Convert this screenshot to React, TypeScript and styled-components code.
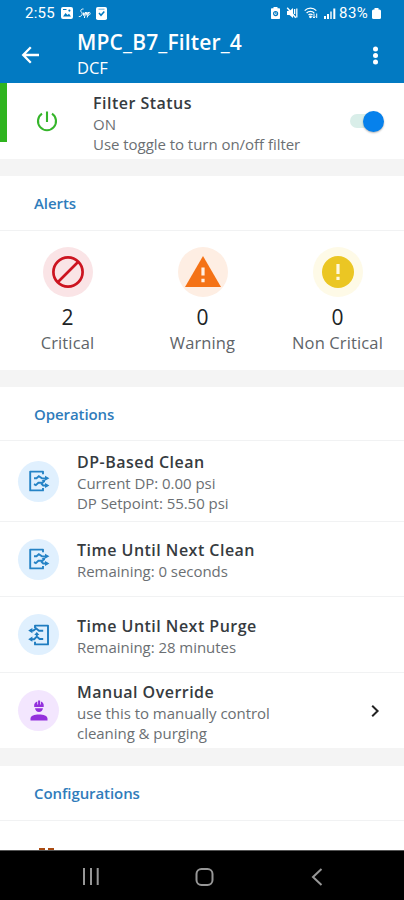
import React from 'react';
import styled, { createGlobalStyle } from 'styled-components';

const GlobalStyle = createGlobalStyle`
  * { box-sizing: border-box; }
  body { margin: 0; background: #fff; font-family: "Open Sans", sans-serif; }
  svg { display: block; flex: none; }
`;

const Screen = styled.div`
  width: 404px;
  height: 900px;
  display: flex;
  flex-direction: column;
  overflow: hidden;
  background: #fff;
`;

const Header = styled.header`
  flex: none;
  height: 83px;
  background: #027ac2;
  color: #fff;
`;

const StatusBar = styled.div`
  height: 26px;
  display: flex;
  align-items: center;
  padding: 0 23px 0 25px;
  font: 400 15px/26px Roboto, sans-serif;
`;

const Clock = styled.span`
  width: 36px;
  letter-spacing: 0.25px;
`;

const StatusIcons = styled.div<{ $gap: number }>`
  display: flex;
  align-items: center;
  gap: ${(p) => p.$gap}px;
`;

const Spacer = styled.div`
  flex: 1;
`;

const Battery = styled.span`
  margin-left: 3px;
  margin-right: 2px;
  width: 31px;
  letter-spacing: 0.5px;
`;

const TitleBar = styled.div`
  display: flex;
  height: 57px;
  padding: 0 20px;
`;

const IconButton = styled.button<{ $width: number; $top: number }>`
  width: ${(p) => p.$width}px;
  border: 0;
  padding: ${(p) => p.$top}px 0 0;
  background: none;
  color: inherit;
  display: flex;
  align-items: flex-start;
`;

const TitleText = styled.div`
  flex: 1;
`;

const Title = styled.h1`
  margin: 1px 0 0;
  font-size: 21px;
  line-height: 30px;
  font-weight: 600;
  letter-spacing: 0.16px;
`;

const Subtitle = styled.div`
  font-size: 16.5px;
  line-height: 22px;
`;

const Gap = styled.div<{ $height: number }>`
  flex: none;
  height: ${(p) => p.$height}px;
  background: #f4f4f4;
`;

const StatusCard = styled.section`
  flex: none;
  height: 76px;
  display: flex;
  align-items: center;
  padding-right: 20px;
`;

const ActiveStripe = styled.div`
  align-self: flex-start;
  width: 7px;
  height: 59px;
  background: #2fb41f;
`;

const PowerSlot = styled.div`
  width: 86px;
  padding-left: 29px;
`;

const TextBlock = styled.div<{ $shift?: number }>`
  flex: 1;
  padding-top: ${(p) => p.$shift ?? 3}px;
`;

const ItemTitle = styled.div`
  font-size: 16px;
  line-height: 22px;
  font-weight: 600;
  letter-spacing: 0.48px;
  color: #363b40;
`;

const ItemLine = styled.div`
  font-size: 15px;
  line-height: 20px;
  color: #6b6f73;
  letter-spacing: -0.04px;
  white-space: nowrap;
`;

const Toggle = styled.div`
  width: 28px;
  height: 14px;
  display: flex;
  align-items: center;
  background: #d9eee9;
  border-radius: 7px;
  margin-right: 6px;
`;

const Knob = styled.div`
  flex: none;
  width: 21px;
  height: 21px;
  margin-left: 13px;
  border-radius: 50%;
  background: #0681ec;
  box-shadow: 0 1px 2px rgba(0, 0, 0, 0.3);
`;

const SectionHeader = styled.h2<{ $height: number }>`
  flex: none;
  height: ${(p) => p.$height}px;
  margin: 0;
  padding: 0 34px;
  display: flex;
  align-items: center;
  border-bottom: 1px solid #f1f2f3;
  color: #2f7cbb;
  font-size: 15px;
  font-weight: 600;
  letter-spacing: -0.08px;
`;

const AlertGrid = styled.section`
  flex: none;
  height: 139px;
  display: grid;
  grid-template-columns: repeat(3, 135px);
  padding-top: 16px;
`;

const AlertCell = styled.div`
  display: flex;
  flex-direction: column;
  align-items: center;
`;

const Disc = styled.div<{ $size: number; $color: string }>`
  flex: none;
  width: ${(p) => p.$size}px;
  height: ${(p) => p.$size}px;
  border-radius: 50%;
  background: ${(p) => p.$color};
  display: flex;
  align-items: center;
  justify-content: center;
`;

const AlertCount = styled.div`
  margin-top: 6px;
  font-size: 21px;
  line-height: 28px;
  color: #202326;
`;

const AlertLabel = styled.div`
  font-size: 16.5px;
  line-height: 24px;
  letter-spacing: 0.13px;
  color: #606468;
`;

const OperationRow = styled.div<{ $height: number; $last?: boolean }>`
  flex: none;
  height: ${(p) => p.$height}px;
  display: flex;
  align-items: center;
  gap: 18px;
  padding: 0 24px 0 18px;
  border-bottom: ${(p) => (p.$last ? 0 : 1)}px solid #f1f2f3;
`;

const PartialRow = styled.div`
  flex: 1;
  min-height: 0;
  overflow: hidden;
  padding: 27px 0 0 38px;
`;

const NavBar = styled.nav`
  flex: none;
  height: 50px;
  background: #000;
  border-top: 1px solid #555;
  display: flex;
  align-items: center;
  justify-content: space-between;
  padding: 2px 81px 0 82px;
`;

const HomeSlot = styled.div`
  padding-right: 2px;
`;

const PictureIcon = () => (
  <svg width="12" height="12" viewBox="0 0 12 12">
    <rect width="12" height="12" rx="2" fill="#fff" />
    <path d="M2 9.5 4.5 6l2 2L8 6.8l2 2.7z" fill="#027ac2" />
    <circle cx="8.4" cy="3.6" r="1.1" fill="#027ac2" />
    <path d="M2 2.5h3.5" stroke="#027ac2" />
  </svg>
);

const ScribbleIcon = () => (
  <svg width="13" height="11" viewBox="0 0 13 11" fill="none" stroke="#fff" strokeWidth="1">
    <path d="M5.5 1C3 .8 2 2.8 3.5 4.2S4 8.6.8 8.6M5.4 4.5l.2 3 2-3.5L6.4 10M8 7.6l.9-3.6.5 2.5 1.5-2.5M9.2 9.5l1.3-5c2.5-.8 2 2.7-.4 2.9" />
  </svg>
);

const CheckIcon = () => (
  <svg width="11" height="13" viewBox="0 0 11 13">
    <rect width="11" height="13" rx="1.8" fill="#fff" />
    <path d="m3 6 2 2.3L8.3 4.5" fill="none" stroke="#027ac2" strokeWidth="1.5" />
    <path d="M2.5 2.2h6" stroke="#027ac2" strokeWidth=".6" />
  </svg>
);

const SaverIcon = () => (
  <svg width="9" height="12" viewBox="0 0 9 12">
    <path d="M2.5 0h4v1.2H8c.6 0 1 .4 1 1V11c0 .6-.4 1-1 1H1c-.6 0-1-.4-1-1V2.2c0-.6.4-1 1-1h1.5z" fill="#fff" />
    <circle cx="4.6" cy="6.6" r="2" fill="none" stroke="#027ac2" strokeWidth="1.2" />
    <path d="M4.6 5.2v1.6h1.2" fill="none" stroke="#027ac2" strokeWidth=".8" />
  </svg>
);

const MuteIcon = () => (
  <svg width="12" height="12" viewBox="0 0 12 12">
    <path d="M1 4h2.5L7 1v10L3.5 8H1z" fill="#fff" />
    <path d="m1.2.8 8.6 10" stroke="#fff" strokeWidth="1.4" />
    <path d="M8.6 2v5M10.8 1.5v9" stroke="#fff" strokeWidth="1.3" />
  </svg>
);

const WifiIcon = () => (
  <svg width="14" height="12" viewBox="0 0 14 12" fill="none" stroke="#fff" strokeWidth="1.2">
    <path d="M.7 3.7a8 8 0 0 1 11.6 0M2.6 6a5.3 5.3 0 0 1 7.6 0M4.5 8a2.8 2.8 0 0 1 4 0" />
    <circle cx="6.5" cy="9.8" r=".8" fill="#fff" />
    <path d="M10 6.5V11M8.7 9.5 10 11l1.3-1.5M12.7 11V6.5" strokeWidth="1" />
  </svg>
);

const SignalIcon = () => (
  <svg width="12" height="11" viewBox="0 0 12 11" fill="#fff">
    <rect y="8" width="2" height="3" />
    <rect x="3" y="6" width="2" height="5" />
    <rect x="6" y="3.5" width="2" height="7.5" opacity=".7" />
    <rect x="9.3" y="0.5" width="2" height="10.5" />
  </svg>
);

const BatteryIcon = () => (
  <svg width="9" height="11" viewBox="0 0 9 11" fill="#fff">
    <rect x="2.5" width="4" height="3" />
    <rect y="1.5" width="9" height="9.5" rx="1.5" />
  </svg>
);

const BackArrow = () => (
  <svg width="20" height="18" viewBox="0 0 20 18" fill="none" stroke="#fff" strokeWidth="2.3">
    <path d="M19 9H3.5M10.8 1.2 3.2 9l7.6 7.8" />
  </svg>
);

const MoreIcon = () => (
  <svg width="6" height="19" viewBox="0 0 6 19" fill="#fff">
    <circle cx="2.5" cy="3" r="2.5" />
    <circle cx="2.5" cy="9.5" r="2.5" />
    <circle cx="2.5" cy="16" r="2.5" />
  </svg>
);

const PowerIcon = () => (
  <svg width="22" height="22" viewBox="0 0 22 22" fill="none" stroke="#35b52a" strokeWidth="2.1">
    <path d="M11 1.5V12M6 3.7a9 9 0 1 0 10 0" />
  </svg>
);

const BlockIcon = () => (
  <svg width="34" height="34" viewBox="0 0 34 34" fill="none" stroke="#cc1420" strokeWidth="2.7">
    <circle cx="17" cy="17" r="14.6" />
    <path d="M27 7 7 27" />
  </svg>
);

const WarningIcon = () => (
  <svg width="36" height="32" viewBox="0 0 36 32">
    <path d="M18 0 36 31H0z" fill="#f47216" />
    <path d="M18 11.5v8M18 22.8v3.4" stroke="#fff0e4" strokeWidth="3.2" />
  </svg>
);

const NoticeIcon = () => (
  <svg width="32" height="32" viewBox="0 0 32 32">
    <circle cx="16" cy="16" r="16" fill="#ebc623" />
    <path d="M16 8v10M16 20.7V24" stroke="#fff9df" strokeWidth="3.2" />
  </svg>
);

const CleanIcon = () => (
  <svg width="22" height="22" viewBox="0 0 22 22" fill="none" stroke="#2583c6" strokeWidth="1.9">
    <path d="M15 4.2V1.6H2.2v18.8H15v-2.4" strokeLinejoin="round" />
    <path d="M6 8.2h2.5l2.3-1.9L14 8.4h4M6 14.2l1.8.9 2.6-2.4h4.2l1.6-2M13.2 13.6l2 1.9h4" />
    <path d="m17 5.8 4.4 2.5-4.4 2.4zM17 13.1l4.4 2.5-4.4 2.4zM13.6 10.2l3.4-1v3.4z" fill="#2583c6" stroke="none" />
  </svg>
);

const PurgeIcon = () => (
  <svg width="22" height="22" viewBox="0 0 22 22" fill="none" stroke="#1f7cc0" strokeWidth="1.9">
    <path d="M7 4V1.6h13v18.8H7v-2.6" strokeLinejoin="round" />
    <path d="M2 6.6h3.4l2.8-2.1 2.8 2.3h4.2M3 15.2h3.2l2.6-2.6 2.8 2.4h3.6M8.8 12.6V10" />
    <path d="M4.4 4 .2 6.6l4.2 2.6zM4.4 12.6.2 15.2l4.2 2.6zM6.2 10.9l2.6-2.8 2.6 2.8z" fill="#1f7cc0" stroke="none" />
  </svg>
);

const WorkerIcon = () => (
  <svg width="18" height="21" viewBox="0 0 18 21" fill="#9330dc">
    <path d="M4.2 7V4.7C4.5 3 5.7 1.9 7.3 1.4v3h.8V.4h2v4h.8v-3c1.6.5 2.6 1.8 2.8 3.3V7z" />
    <path d="M5 8.3h8c-.4 2.2-1.8 3.8-4 3.8s-3.6-1.6-4-3.8zM.5 20.5v-2c0-2.7 4-4.1 8.5-4.1s8.5 1.4 8.5 4.1v2z" />
  </svg>
);

const ChevronIcon = () => (
  <svg width="10" height="14" viewBox="0 0 10 14" fill="none" stroke="#222" strokeWidth="2">
    <path d="m2.2 1.7 5.4 5.3-5.4 5.3" />
  </svg>
);

const RecentsIcon = () => (
  <svg width="17" height="17" viewBox="0 0 17 17" stroke="#979797" strokeWidth="2">
    <path d="M2 0v17M9 0v17M15.7 0v17" />
  </svg>
);

const HomeIcon = () => (
  <svg width="19" height="18" viewBox="0 0 19 18" fill="none" stroke="#979797" strokeWidth="2">
    <rect x="1.5" y="1" width="16" height="16" rx="5" />
  </svg>
);

const NavBackIcon = () => (
  <svg width="12" height="18" viewBox="0 0 12 18" fill="none" stroke="#979797" strokeWidth="2">
    <path d="M10.5 1 2 9l8.5 8" />
  </svg>
);

const alerts = [
  { count: 2, label: 'Critical', disc: '#fae4e6', icon: <BlockIcon /> },
  { count: 0, label: 'Warning', disc: '#feeee3', icon: <WarningIcon /> },
  { count: 0, label: 'Non Critical', disc: '#fefae7', icon: <NoticeIcon /> },
];

const operations = [
  { title: 'DP-Based Clean', lines: ['Current DP: 0.00 psi', 'DP Setpoint: 55.50 psi'], height: 81, shift: 1, disc: '#e0f0fe', icon: <CleanIcon /> },
  { title: 'Time Until Next Clean', lines: ['Remaining: 0 seconds'], height: 75, shift: 2, disc: '#e0f0fe', icon: <CleanIcon /> },
  { title: 'Time Until Next Purge', lines: ['Remaining: 28 minutes'], height: 76, shift: 3, disc: '#e0f0fe', icon: <PurgeIcon /> },
  { title: 'Manual Override', lines: ['use this to manually control', 'cleaning & purging'], height: 75, disc: '#f3e6fe', icon: <WorkerIcon />, link: true },
];

export default function App() {
  return (
    <Screen>
      <GlobalStyle />
      <Header>
        <StatusBar>
          <Clock>2:55</Clock>
          <StatusIcons $gap={5}>
            <PictureIcon />
            <ScribbleIcon />
            <CheckIcon />
          </StatusIcons>
          <Spacer />
          <StatusIcons $gap={6}>
            <SaverIcon />
            <MuteIcon />
            <WifiIcon />
            <SignalIcon />
          </StatusIcons>
          <Battery>83%</Battery>
          <BatteryIcon />
        </StatusBar>
        <TitleBar>
          <IconButton $width={57} $top={20} aria-label="Back">
            <BackArrow />
          </IconButton>
          <TitleText>
            <Title>MPC_B7_Filter_4</Title>
            <Subtitle>DCF</Subtitle>
          </TitleText>
          <IconButton $width={11} $top={20} aria-label="More options">
            <MoreIcon />
          </IconButton>
        </TitleBar>
      </Header>

      <StatusCard>
        <ActiveStripe />
        <PowerSlot>
          <PowerIcon />
        </PowerSlot>
        <TextBlock $shift={3}>
          <ItemTitle>Filter Status</ItemTitle>
          <ItemLine>ON</ItemLine>
          <ItemLine>Use toggle to turn on/off filter</ItemLine>
        </TextBlock>
        <Toggle role="switch" aria-checked="true">
          <Knob />
        </Toggle>
      </StatusCard>
      <Gap $height={17} />

      <SectionHeader $height={55}>Alerts</SectionHeader>
      <AlertGrid>
        {alerts.map((a) => (
          <AlertCell key={a.label}>
            <Disc $size={50} $color={a.disc}>{a.icon}</Disc>
            <AlertCount>{a.count}</AlertCount>
            <AlertLabel>{a.label}</AlertLabel>
          </AlertCell>
        ))}
      </AlertGrid>
      <Gap $height={17} />

      <SectionHeader $height={54}>Operations</SectionHeader>
      {operations.map((o) => (
        <OperationRow key={o.title} $height={o.height} $last={o.link}>
          <Disc $size={41} $color={o.disc}>{o.icon}</Disc>
          <TextBlock $shift={o.shift}>
            <ItemTitle>{o.title}</ItemTitle>
            {o.lines.map((l) => (
              <ItemLine key={l}>{l}</ItemLine>
            ))}
          </TextBlock>
          {o.link && <ChevronIcon />}
        </OperationRow>
      ))}
      <Gap $height={18} />

      <SectionHeader $height={55}>Configurations</SectionHeader>
      <PartialRow>
        <svg width="17" height="17" viewBox="0 0 17 17" fill="#a94b12">
          <rect x="1" width="6" height="17" />
          <rect x="10" width="6" height="17" />
        </svg>
      </PartialRow>

      <NavBar>
        <RecentsIcon />
        <HomeSlot>
          <HomeIcon />
        </HomeSlot>
        <NavBackIcon />
      </NavBar>
    </Screen>
  );
}
